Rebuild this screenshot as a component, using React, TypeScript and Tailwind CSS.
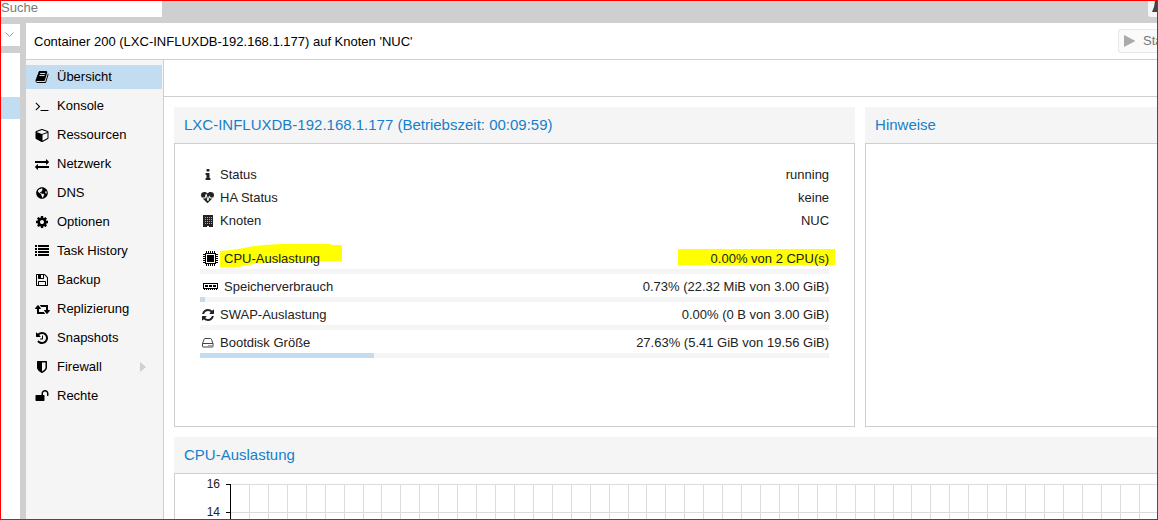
import { useState, type ReactNode } from "react";
import { FaGlobeAmericas } from "react-icons/fa";

interface GlyphProps {
    d: string;
    box?: string;
    className?: string;
}

interface MenuItem {
    label: string;
    icon: ReactNode;
    expandable?: boolean;
}

interface UsageItem {
    label: string;
    value: string;
    percent: number;
    icon: ReactNode;
    wide?: boolean;
    marked?: boolean;
}

// path data for the solid icons
const paths = {
    book: "M1703 478q40 57 18 129l-275 906q-19 64-76.5 107.5t-122.5 43.5h-923q-77 0-148.5-53.5t-99.5-131.5q-24-67-2-127 0-4 3-27t4-37q1-8-3-21.500t-3-19.500q2-11 8-21t16.500-23.500 16.500-23.500q23-38 45-91.500t30-91.500q3-10 .5-30t-.5-28q3-11 17-28t17-23q21-36 42-92t25-90q1-9-2.500-32t.5-28q4-13 22-30.500t22-22.500q19-26 42.500-84.500t27.500-96.500q1-8-3-25.500t-2-26.500q2-8 9-18t18-23 17-21q8-12 16.500-30.500t15-35 16-36 19.500-32 26.500-23.500 36-11.500 47.500 5.500l-1 3q38-9 51-9h761q74 0 114 56t18 130l-274 906q-36 119-71.500 153.500t-128.500 34.500h-869q-27 0-38 15-11 16-1 43 24 70 144 70h923q29 0 56-15.500t35-41.500l300-987q7-22 5-57 38 15 59 43zm-1064 2q-4 13 2 22.500t20 9.500h608q13 0 25.500-9.500t16.500-22.500l21-64q4-13-2-22.500t-20-9.500h-608q-13 0-25.500 9.500t-16.500 22.500zm-83 256q-4 13 2 22.500t20 9.500h608q13 0 25.500-9.500t16.500-22.500l21-64q4-13-2-22.500t-20-9.500h-608q-13 0-25.500 9.500t-16.500 22.500z",
    terminal: "M649 983l-466 466q-10 10-23 10t-23-10l-50-50q-10-10-10-23t10-23l393-393-393-393q-10-10-10-23t10-23l50-50q10-10 23-10t23 10l466 466q10 10 10 23t-10 23zm1079 457v64q0 14-9 23t-23 9h-960q-14 0-23-9t-9-23v-64q0-14 9-23t23-9h960q14 0 23 9t9 23z",
    cube: "M896 1629l640-349v-636l-640 233v752zm-64-865l698-254-698-254-698 254zm832-252v768q0 35-18 65t-49 47l-704 384q-28 16-61 16t-61-16l-704-384q-31-17-49-47t-18-65v-768q0-40 23-73t61-47l704-256q22-8 44-8t44 8l704 256q38 14 61 47t23 73z",
    exchange: "M1792 1184v192q0 13-9.5 22.5t-22.5 9.5h-1376v192q0 13-9.5 22.5t-22.5 9.5q-12 0-24-10l-319-320q-9-9-9-22 0-14 9-23l320-320q9-9 23-9 13 0 22.5 9.5t9.5 22.5v192h1376q13 0 22.5 9.5t9.5 22.5zm0-544q0 14-9 23l-320 320q-9 9-23 9-13 0-22.5-9.5t-9.5-22.5v-192h-1376q-13 0-22.5-9.5t-9.5-22.5v-192q0-13 9.5-22.5t22.5-9.5h1376v-192q0-14 9-23t23-9q12 0 24 10l319 319q9 9 9 23z",
    cog: "M1152 896q0-106-75-181t-181-75-181 75-75 181 75 181 181 75 181-75 75-181zm512-109v222q0 12-8 23t-20 13l-185 28q-19 54-39 91 35 50 107 138 10 12 10 25t-9 23q-27 37-99 108t-94 71q-12 0-26-9l-138-108q-44 23-91 38-16 136-29 186-7 28-36 28h-222q-14 0-24.5-8.5t-11.5-21.5l-28-184q-49-16-90-37l-141 107q-10 9-25 9-14 0-25-11-126-114-165-168-7-10-7-23 0-12 8-23 15-21 51-66.5t54-70.5q-27-50-41-99l-183-27q-13-2-21-12.5t-8-23.5v-222q0-12 8-23t19-13l186-28q14-46 39-92-40-57-107-138-10-12-10-24 0-10 9-23 26-36 98.5-107.5t94.5-71.5q13 0 26 10l138 107q44-23 91-38 16-136 29-186 7-28 36-28h222q14 0 24.5 8.5t11.5 21.5l28 184q49 16 90 37l142-107q9-9 24-9 13 0 25 10 129 119 165 170 7 8 7 22 0 12-8 23-15 21-51 66.5t-54 70.5q26 50 41 98l183 28q13 2 21 12.5t8 23.5z",
    list: "M0 128h256v256h-256zM384 128h1408v256h-1408zM0 512h256v256h-256zM384 512h1408v256h-1408zM0 896h256v256h-256zM384 896h1408v256h-1408zM0 1280h256v256h-256zM384 1280h1408v256h-1408z",
    floppy: "M512 1536h768v-384h-768v384zm896 0h128v-896q0-14-10-38.5t-20-34.5l-281-281q-10-10-34-20t-39-10v416q0 40-28 68t-68 28h-576q-40 0-68-28t-28-68v-416h-128v1280h128v-416q0-40 28-68t68-28h832q40 0 68 28t28 68v416zm-384-928v-320q0-13-9.5-22.5t-22.5-9.5h-192q-13 0-22.5 9.5t-9.5 22.5v320q0 13 9.5 22.5t22.5 9.5h192q13 0 22.5-9.5t9.5-22.5zm640 32v928q0 40-28 68t-68 28h-1344q-40 0-68-28t-28-68v-1344q0-40 28-68t68-28h928q40 0 88 20t76 48l280 280q28 28 48 76t20 88z",
    retweet: "M1280 1504q0 13-9.5 22.5t-22.5 9.5h-960q-8 0-13.5-2t-9-7-5.5-8-3-11.5-1-11.5v-600h-192q-26 0-45-19t-19-45q0-24 15-41l320-384q19-22 49-22t49 22l320 384q15 17 15 41 0 26-19 45t-45 19h-192v384h576q16 0 25 11l160 192q7 10 7 21zm640-416q0 24-15 41l-320 384q-20 23-49 23t-49-23l-320-384q-15-17-15-41 0-26 19-45t45-19h192v-384h-576q-16 0-25-12l-160-192q-7-9-7-20 0-13 9.5-22.5t22.5-9.5h960q8 0 13.5 2t9 7 5.5 8 3 11.5 1 11.5v600h192q26 0 45 19t19 45z",
    history: "M1664 896q0 156-61 298t-164 245-245 164-298 61q-172 0-327-72.5t-264-204.5q-7-10-6.5-22.5t8.5-20.5l137-138q10-9 25-9 16 2 23 12 73 95 179 147t225 52q104 0 198.5-40.5t163.5-109.5 109.5-163.5 40.5-198.5-40.5-198.5-109.5-163.5-163.5-109.5-198.5-40.5q-98 0-188 35.5t-160 101.5l137 138q31 30 14 69-17 40-59 40h-448q-26 0-45-19t-19-45v-448q0-42 40-59 39-17 69 14l130 129q107-101 244.5-156.5t284.5-55.5q156 0 298 61t245 164 164 245 61 298zm-640-288v448q0 14-9 23t-23 9h-320q-14 0-23-9t-9-23v-64q0-14 9-23t23-9h224v-352q0-14 9-23t23-9h64q14 0 23 9t9 23z",
    shield: "M1344 960v-640h-448v1137q119-63 213-137 235-184 235-360zm192-768v768q0 86-33.5 170.5t-83 150-118 127.5-126.5 103-121 77.5-89.5 49.5-42.5 20q-12 6-26 6t-26-6q-16-7-42.5-20t-89.5-49.5-121-77.5-126.5-103-118-127.5-83-150-33.5-170.5v-768q0-26 19-45t45-19h1152q26 0 45 19t19 45z",
    unlock: "M1728 576v256q0 26-19 45t-45 19h-64q-26 0-45-19t-19-45v-256q0-106-75-181t-181-75-181 75-75 181v192h96q40 0 68 28t28 68v576q0 40-28 68t-68 28h-960q-40 0-68-28t-28-68v-576q0-40 28-68t68-28h672v-192q0-185 131.5-316.5t316.5-131.5 316.5 131.5 131.5 316.5z",
    info: "M1216 1344v128q0 26-19 45t-45 19h-512q-26 0-45-19t-19-45v-128q0-26 19-45t45-19h64v-384h-64q-26 0-45-19t-19-45v-128q0-26 19-45t45-19h384q26 0 45 19t19 45v576h64q26 0 45 19t19 45zm-128-1152v192q0 26-19 45t-45 19h-256q-26 0-45-19t-19-45v-192q0-26 19-45t45-19h256q26 0 45 19t19 45z",
    heartbeat: "M1280 1024h305q-5 6-10 10.5t-9 7.5l-3 4-623 600q-18 18-44 18t-44-18l-624-602q-5-2-21-20h369q22 0 39.5-13.5t22.5-34.5l70-281 190 667q6 20 23 33t39 13q21 0 38-13t23-33l146-485 56 112q18 35 57 35zm512-428q0 145-103 300h-369l-111-221q-8-17-25.5-27t-36.5-8q-45 5-56 46l-129 430-196-686q-6-20-23.5-33t-39.5-13-39 13.5-22 34.5l-116 464h-423q-103-155-103-300 0-220 127-344t351-124q62 0 126.5 21.5t120 58 95.5 68.5 76 68q36-36 76-68t95.5-68.5 120-58 126.5-21.5q224 0 351 124t127 344z",
    refresh: "M1639 1056q0 5-1 7-64 268-268 434.5t-478 166.5q-146 0-282.5-55t-243.5-157l-129 129q-19 19-45 19t-45-19-19-45v-448q0-26 19-45t45-19h448q26 0 45 19t19 45-19 45l-137 137q71 66 161 102t187 36q134 0 250-65t186-179q11-17 53-117 8-23 30-23h192q13 0 22.5 9.5t9.5 22.5zm25-800v448q0 26-19 45t-45 19h-448q-26 0-45-19t-19-45 19-45l138-138q-148-137-349-137-134 0-250 65t-186 179q-11 17-53 117-8 23-30 23h-199q-13 0-22.5-9.5t-9.5-22.5v-7q65-268 270-434.5t480-166.5q146 0 284 55.5t245 156.5l130-129q19-19 45-19t45 19 19 45z",
};

const Glyph = ({ d, box = "0 0 1792 1792", className = "size-[14px]" }: GlyphProps) => (
    <svg viewBox={box} className={className} fill="currentColor" aria-hidden="true">
        <path d={d} />
    </svg>
);

const BuildingIcon = () => (
    <svg viewBox="0 0 14 14" className="size-[14px]" shapeRendering="crispEdges" aria-hidden="true">
        <path d="M2 1h10v12H8v-1H6v1H2z" fill="#222" />
        <path d="M4 3.500h7M4 5.500h7M4 7.500h7M4 9.500h7" stroke="#aaa" strokeDasharray="1 1" />
    </svg>
);

const CpuIcon = () => (
    <svg viewBox="0 0 15 15" className="size-[15px]" shapeRendering="crispEdges" aria-hidden="true">
        <path d="M3 3h9v9H3z" fill="#fff" />
        <path d="M2 2h11v1H2zM2 12h11v1H2zM2 2h1v11H2zM12 2h1v11h-1zM4 4h7v7H4z" />
        <path d="M3.500 0v2M5.500 0v2M7.500 0v2M9.500 0v2M11.500 0v2M3.500 13v2M5.500 13v2M7.500 13v2M9.500 13v2M11.500 13v2M0 3.500h2M0 5.500h2M0 7.500h2M0 9.500h2M0 11.500h2M13 3.500h2M13 5.500h2M13 7.500h2M13 9.500h2M13 11.500h2" stroke="#000" />
    </svg>
);

const MemoryIcon = () => (
    <svg viewBox="0 0 15 15" className="size-[15px]" shapeRendering="crispEdges" aria-hidden="true">
        <path d="M0 4h15v1H0zM0 4h1v6H0zM14 4h1v6h-1zM0 9h15v1H0zM2 6h3v2H2zM6 6h3v2H6zM10 6h3v2h-3zM1 10h1v1H1zM3 10h1v1H3zM5 10h1v1H5zM7 10h1v1H7zM9 10h1v1H9zM11 10h1v1h-1zM13 10h1v1h-1z" />
    </svg>
);

const DiskIcon = () => (
    <svg viewBox="0 0 14 14" className="size-[14px]" fill="none" stroke="#444" aria-hidden="true">
        <path d="M1.500 7.500L3.200 3.200Q3.400 2.500 4 2.500h5.500q.7 0 .9.700L12 7.500v3q0 .5-.5.5H2q-.5 0-.5-.5zM1.500 7.500H12" />
        <path d="M7.500 9.500h1M9.500 9.500h1" />
    </svg>
);

const menu: MenuItem[] = [
    { label: "Übersicht", icon: <Glyph d={paths.book} /> },
    { label: "Konsole", icon: <Glyph d={paths.terminal} /> },
    { label: "Ressourcen", icon: <Glyph d={paths.cube} box="-64 0 1792 1792" /> },
    { label: "Netzwerk", icon: <Glyph d={paths.exchange} /> },
    { label: "DNS", icon: <FaGlobeAmericas className="size-3" /> },
    { label: "Optionen", icon: <Glyph d={paths.cog} /> },
    { label: "Task History", icon: <Glyph d={paths.list} /> },
    { label: "Backup", icon: <Glyph d={paths.floppy} /> },
    { label: "Replizierung", icon: <Glyph d={paths.retweet} box="0 0 1920 1792" className="h-[14px] w-[15px]" /> },
    { label: "Snapshots", icon: <Glyph d={paths.history} /> },
    { label: "Firewall", icon: <Glyph d={paths.shield} />, expandable: true },
    { label: "Rechte", icon: <Glyph d={paths.unlock} /> },
];

const infos = [
    { label: "Status", value: "running", icon: <Glyph d={paths.info} /> },
    { label: "HA Status", value: "keine", icon: <Glyph d={paths.heartbeat} className="size-[13px]" /> },
    { label: "Knoten", value: "NUC", icon: <BuildingIcon /> },
];

const usages: UsageItem[] = [
    { label: "CPU-Auslastung", value: "0.00% von 2 CPU(s)", percent: 0, icon: <CpuIcon />, wide: true, marked: true },
    { label: "Speicherverbrauch", value: "0.73% (22.32 MiB von 3.00 GiB)", percent: 0.73, icon: <MemoryIcon />, wide: true },
    { label: "SWAP-Auslastung", value: "0.00% (0 B von 3.00 GiB)", percent: 0, icon: <Glyph d={paths.refresh} /> },
    { label: "Bootdisk Größe", value: "27.63% (5.41 GiB von 19.56 GiB)", percent: 27.63, icon: <DiskIcon /> },
];

const PanelTitle = ({ children }: { children: ReactNode }) => (
    <h2 className="h-9 bg-[#f5f5f5] px-[10px] text-[15px] leading-9 whitespace-nowrap text-[#157fcc]">{children}</h2>
);

const UsageRow = ({ item }: { item: UsageItem }) => (
    <div className="relative isolate h-7">
        {item.marked && (
            <>
                <svg className="absolute -top-1 left-5 -z-10 h-6 w-[122px]" viewBox="0 0 122 24" fill="#ff0" aria-hidden="true">
                    <path d="M0 8l12-1 12-2 10-2 11-1 15-1h51v1h11v16H73l-18 1-15 1-12 2-10 2H0z" />
                </svg>
                <span className="absolute top-0.5 -right-1.5 -z-10 h-4 w-[157px] bg-[#ff0]" />
            </>
        )}
        <div className="flex h-[22px] items-center pt-px">
            <span className={item.wide ? "flex w-6 pl-[3px]" : "flex w-5 pl-px"}>{item.icon}</span>
            <span>{item.label}</span>
            <span className="ml-auto">{item.value}</span>
        </div>
        <div className="h-[5px] bg-[#f5f5f5]">
            <div className="h-full bg-[#c2ddf2]" style={{ width: `${item.percent}%` }} />
        </div>
    </div>
);

const CpuChart = () => {
    const columns = Array.from({ length: 120 }, (_, i) => Math.round((i + 1) * 18.93) + 55);
    return (
        <svg className="block h-[60px] w-full" shapeRendering="crispEdges" role="img" aria-label="CPU-Auslastung">
            {[16, 14].map((tick, i) => (
                <g key={tick}>
                    <path d={`M56 ${10.5 + i * 28}H4000`} stroke="#dcdcdc" />
                    <path d={`M51 ${10.5 + i * 28}h5`} stroke="#000" />
                    <text x="45" y={14 + i * 28} textAnchor="end" className="fill-[#222] text-[12px]">{tick}</text>
                </g>
            ))}
            {columns.map((x) => (
                <path key={x} d={`M${x + 0.5} 10V60`} stroke="#dcdcdc" />
            ))}
            <path d="M55.5 10V60" stroke="#000" />
        </svg>
    );
};

export default function App() {
    const [active, setActive] = useState("Übersicht");

    return (
        <div className="flex h-screen flex-col overflow-hidden border border-[#f00] bg-[#cfcfcf] font-['Liberation_Sans',Arial,sans-serif] text-[13px] text-black">
            {/* top bar */}
            <header className="flex h-[22px] shrink-0 items-start justify-between">
                <input
                    type="search"
                    aria-label="Suche"
                    placeholder="Suche"
                    className="h-4 w-[161px] bg-white pb-1 leading-3 outline-none placeholder:text-[#777]"
                />
                <button aria-label="Dokumentation" className="flex h-4 w-[9px] items-start overflow-hidden rounded-bl-[3px] bg-[#f5f5f5] pl-1 text-[#444]">
                    <svg viewBox="0 0 10 12" className="h-3 w-[10px] shrink-0" fill="currentColor" aria-hidden="true">
                        <path d="M3 0h5v6l2 5H0l2-5z" />
                    </svg>
                </button>
            </header>

            <div className="flex min-h-0 flex-1">
                {/* resource tree */}
                <aside className="mr-1.5 flex w-[19px] shrink-0 flex-col">
                    <button aria-label="Ansicht" className="mt-px flex h-[22px] items-center bg-white pl-1">
                        <svg viewBox="0 0 9 6" className="h-1.5 w-[9px]" fill="none" stroke="#999" aria-hidden="true">
                            <path d="M.5 .5l4 4 4-4" />
                        </svg>
                    </button>
                    <div className="mt-[7px] flex-1 bg-white pt-11">
                        <div className="h-[22px] bg-[#c2ddf2]" />
                    </div>
                </aside>

                <main className="flex min-w-0 flex-1 flex-col bg-white">
                    <div className="flex h-[37px] shrink-0 items-center justify-between overflow-hidden border-b border-[#cfcfcf] pl-2">
                        <h1 className="pt-px whitespace-nowrap">Container 200 (LXC-INFLUXDB-192.168.1.177) auf Knoten 'NUC'</h1>
                        <button className="flex h-6 w-[39px] items-center gap-[7px] overflow-hidden rounded-l-[3px] border border-r-0 border-[#e8e8e8] bg-[#fafafa] pl-[5px] text-[#777]">
                            <svg viewBox="0 0 12 12" className="size-3 shrink-0" fill="#aaa" aria-hidden="true">
                                <path d="M0 0l11.500 6L0 12z" />
                            </svg>
                            Start
                        </button>
                    </div>

                    <div className="flex min-h-0 flex-1">
                        <nav className="flex w-[138px] shrink-0 flex-col gap-[5px] border-r border-[#cfcfcf] bg-[#f5f5f5] pt-[5px]">
                            {menu.map((item) => (
                                <button
                                    key={item.label}
                                    onClick={() => setActive(item.label)}
                                    className={
                                        active === item.label
                                            ? "mr-px flex h-6 shrink-0 items-center bg-[#c2ddf2] pl-2"
                                            : "mr-px flex h-6 shrink-0 items-center pl-2"
                                    }
                                >
                                    <span className="flex w-4 shrink-0 justify-center">{item.icon}</span>
                                    <span className="pl-[7px] whitespace-nowrap">{item.label}</span>
                                    {item.expandable && (
                                        <svg viewBox="0 0 6 10" className="mr-4 ml-auto h-[10px] w-1.5" fill="#cfcfcf" aria-hidden="true">
                                            <path d="M0 0l6 5-6 5z" />
                                        </svg>
                                    )}
                                </button>
                            ))}
                        </nav>

                        <div className="flex min-w-0 flex-1 flex-col">
                            <div className="h-[37px] shrink-0 border-b border-[#cfcfcf]" />
                            <div className="min-h-0 flex-1 overflow-hidden pt-[10px] pl-[10px]">
                                <div className="grid grid-cols-[7fr_3fr] gap-[10px]">
                                    <section className="flex flex-col">
                                        <PanelTitle>LXC-INFLUXDB-192.168.1.177 (Betriebszeit: 00:09:59)</PanelTitle>
                                        <div className="min-h-[284px] border border-[#cfcfcf] px-[25px] pt-[19px] text-[#222]">
                                            {infos.map((info) => (
                                                <div key={info.label} className="flex h-[23px] items-center">
                                                    <span className="flex w-5 pl-px">{info.icon}</span>
                                                    <span>{info.label}</span>
                                                    <span className="ml-auto">{info.value}</span>
                                                </div>
                                            ))}
                                            <div className="pt-[15px]">
                                                {usages.map((item) => (
                                                    <UsageRow key={item.label} item={item} />
                                                ))}
                                            </div>
                                        </div>
                                    </section>
                                    <section className="flex flex-col">
                                        <PanelTitle>Hinweise</PanelTitle>
                                        <div className="flex-1 border border-r-0 border-[#cfcfcf]" />
                                    </section>
                                </div>
                                <section className="mt-[10px]">
                                    <PanelTitle>CPU-Auslastung</PanelTitle>
                                    <div className="border border-r-0 border-[#cfcfcf]">
                                        <CpuChart />
                                    </div>
                                </section>
                            </div>
                        </div>
                    </div>
                </main>
            </div>
        </div>
    );
}
